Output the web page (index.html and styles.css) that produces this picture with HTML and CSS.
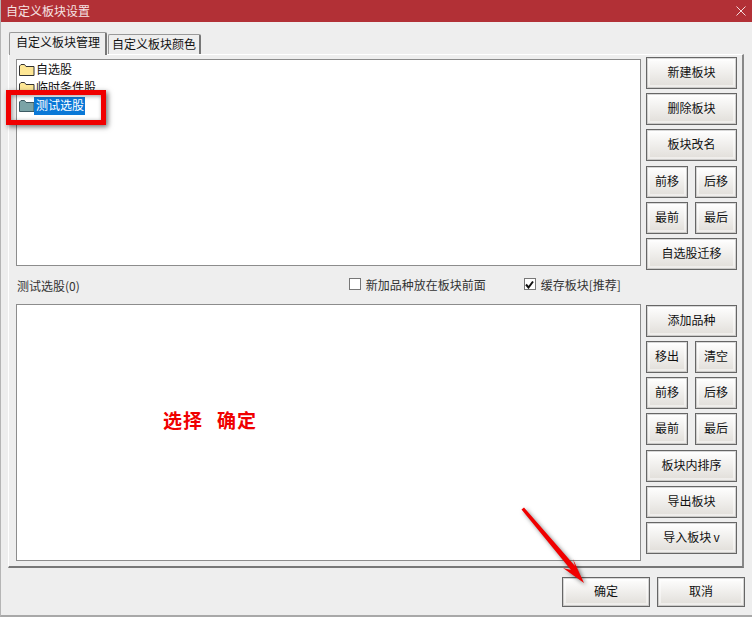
FILE: index.html
```html
<!DOCTYPE html>
<html>
<head>
	<meta charset="UTF-8">
	<title>自定义板块设置</title>
	<link rel="stylesheet" href="styles.css">
</head>
<body>
	<div class="window">
		<div class="titlebar">
			<span>自定义板块设置</span>
			<svg class="close" width="10" height="10" viewBox="0 0 10 10"><path d="M0.5 0.5L9.5 9.5M9.5 0.5L0.5 9.5" stroke="#f3dcdc" stroke-width="1" fill="none"/></svg>
		</div>
		<div class="tabs">
			<div class="tab active">自定义板块管理</div>
			<div class="tab">自定义板块颜色</div>
		</div>
		<div class="panel">
			<div class="row top">
				<div class="list tree">
					<div class="node">
						<svg class="folder" width="16" height="14" viewBox="0 0 16 14"><path d="M0.5 3V12.5H15V3.5H7L5.5 1.5H2Z" fill="#fee795" stroke="#333" stroke-width="1"/></svg>
						<span>自选股</span>
					</div>
					<div class="node">
						<svg class="folder" width="16" height="14" viewBox="0 0 16 14"><path d="M0.5 3V12.5H15V3.5H7L5.5 1.5H2Z" fill="#fee795" stroke="#333" stroke-width="1"/></svg>
						<span>临时条件股</span>
					</div>
					<div class="node">
						<svg class="folder" width="16" height="14" viewBox="0 0 16 14"><path d="M0.5 3V12.5H15V3.5H7L5.5 1.5H2Z" fill="#7aa3a6" stroke="#3c5a63" stroke-width="1"/></svg>
						<span class="selected">测试选股</span>
					</div>
				</div>
				<div class="buttons">
					<button class="wide">新建板块</button>
					<button class="wide">删除板块</button>
					<button class="wide">板块改名</button>
					<button>前移</button>
					<button>后移</button>
					<button>最前</button>
					<button>最后</button>
					<button class="wide">自选股迁移</button>
				</div>
			</div>
			<div class="options">
				<span class="count">测试选股(0)</span>
				<label class="check first"><span class="box"></span>新加品种放在板块前面</label>
				<label class="check second">
					<span class="box"><svg width="9" height="9" viewBox="0 0 9 9"><path d="M1 4.5L3.5 7.5L8 1.5" stroke="#111" stroke-width="2" fill="none"/></svg></span>缓存板块[推荐]
				</label>
			</div>
			<div class="row bottom">
				<div class="list stocks">
					<div class="hint">选择<span class="hint-gap"></span>确定</div>
				</div>
				<div class="buttons long">
					<button class="wide">添加品种</button>
					<button>移出</button>
					<button>清空</button>
					<button>前移</button>
					<button>后移</button>
					<button>最前</button>
					<button>最后</button>
					<button class="wide">板块内排序</button>
					<button class="wide">导出板块</button>
					<button class="wide">导入板块&#8201;v</button>
				</div>
			</div>
		</div>
		<div class="footer">
			<button class="action">确定</button>
			<button class="action">取消</button>
		</div>
		<div class="redbox"></div>
		<svg class="arrow" width="80" height="90" viewBox="0 0 80 90">
			<path d="M3.5 3.5L6 1.5L57 60L55 53L66 77L45 62L53 64Z" fill="#f00000"/>
		</svg>
	</div>
</body>
</html>
```

FILE: styles.css
```css
* {
	box-sizing: border-box;
}
body {
	margin: 0;
	font-family: "Noto Sans CJK SC", "Liberation Sans", sans-serif;
	font-size: 12px;
	color: #111;
	background-color: #a8a8a8;
}
.window {
	position: relative;
	width: 752px;
	height: 617px;
	overflow: hidden;
	background-color: #eeeeee;
	border-left: 1px solid #b5b5b5;
	border-bottom: 2px solid #a8a8a8;
}
.titlebar {
	display: flex;
	align-items: center;
	justify-content: space-between;
	height: 22px;
	margin-left: -1px;
	padding: 0 6px 1px;
	background-color: #b23036;
	color: #f6e4e4;
}
.tabs {
	display: flex;
	align-items: flex-end;
	height: 32px;
	margin-left: 7px;
}
.tab {
	height: 20px;
	width: 93px;
	margin-left: 1px;
	padding: 0 0 0 3px;
	line-height: 18px;
	border: 1px solid #999;
	border-bottom: none;
	border-right: 2px solid #777;
	border-radius: 2px 2px 0 0;
	white-space: nowrap;
}
.tab.active {
	height: 23px;
	width: 98px;
	padding: 0 0 0 6px;
	margin-bottom: -1px;
	background-color: #eeeeee;
	position: relative;
}
.panel {
	width: 736px;
	height: 514px;
	margin-left: 7px;
	padding: 2px 5px 0 7px;
	border-top: 1px solid #fff;
	border-left: 1px solid #fff;
	border-right: 2px solid #888;
	border-bottom: 2px solid #777;
}
.row {
	display: flex;
	justify-content: space-between;
	align-items: flex-start;
}
.row.top {
	height: 213px;
}
.row.bottom {
	height: 257px;
}
.list {
	width: 625px;
	background-color: #fff;
	border: 1px solid #8c8c8c;
}
.tree {
	height: 207px;
	margin-top: 2px;
	padding-top: 1px;
}
.stocks {
	height: 257px;
}
.node {
	display: flex;
	align-items: center;
	height: 18px;
	padding-left: 2px;
}
.node span {
	height: 18px;
	line-height: 16px;
	padding-bottom: 2px;
}
.folder {
	flex: none;
	margin-right: 1px;
}
.node .selected {
	margin-left: -2px;
	padding: 0 1px 2px 2px;
	background-color: #0a78d7;
	color: #fff;
}
.hint {
	display: flex;
	margin: 103px 0 0 146px;
	font-size: 19px;
	font-weight: bold;
	letter-spacing: 1px;
	line-height: 24px;
	color: #f00000;
}
.hint-gap {
	width: 14px;
}
.buttons {
	display: grid;
	grid-template-columns: 42px 42px;
	grid-auto-rows: 32px;
	justify-content: space-between;
	row-gap: 4.2px;
	width: 91px;
}
.buttons.long {
	margin-top: 1px;
	row-gap: 4.17px;
}
.wide {
	grid-column: span 2;
}
button {
	padding: 0 0 3px;
	font-family: inherit;
	font-size: 12px;
	color: #111;
	border: 1px solid #666;
	border-radius: 0;
	background: linear-gradient(#ffffff, #e0ddd8);
	box-shadow: inset 0 0 0 1px rgba(100, 100, 100, 0.25), inset 0 0 0 3px rgba(255, 255, 255, 0.45);
}
.options {
	display: flex;
	align-items: center;
	height: 34px;
}
.count {
	padding: 0 0 4px 1px;
	color: #333;
}
.check {
	display: flex;
	align-items: center;
	padding-bottom: 6px;
	color: #333;
}
.check.first {
	margin-left: 269px;
}
.check.second {
	margin-left: 38px;
}
.box {
	display: flex;
	align-items: center;
	justify-content: center;
	width: 12px;
	height: 12px;
	margin-right: 5px;
	background-color: #fff;
	border: 1px solid #777;
}
.footer {
	display: flex;
	justify-content: flex-end;
	gap: 7px;
	padding: 9px 7px 0 0;
}
.action {
	width: 88px;
	height: 30px;
}
.redbox {
	position: absolute;
	left: 5px;
	top: 90px;
	width: 100px;
	height: 35px;
	border: 5px solid #f00000;
	box-shadow: 2px 2px 5px rgba(0, 0, 0, 0.55), inset 1px 1px 4px rgba(0, 0, 0, 0.4);
}
.arrow {
	position: absolute;
	left: 517px;
	top: 506px;
	filter: drop-shadow(2px 2px 2px rgba(0, 0, 0, 0.5));
}
```
